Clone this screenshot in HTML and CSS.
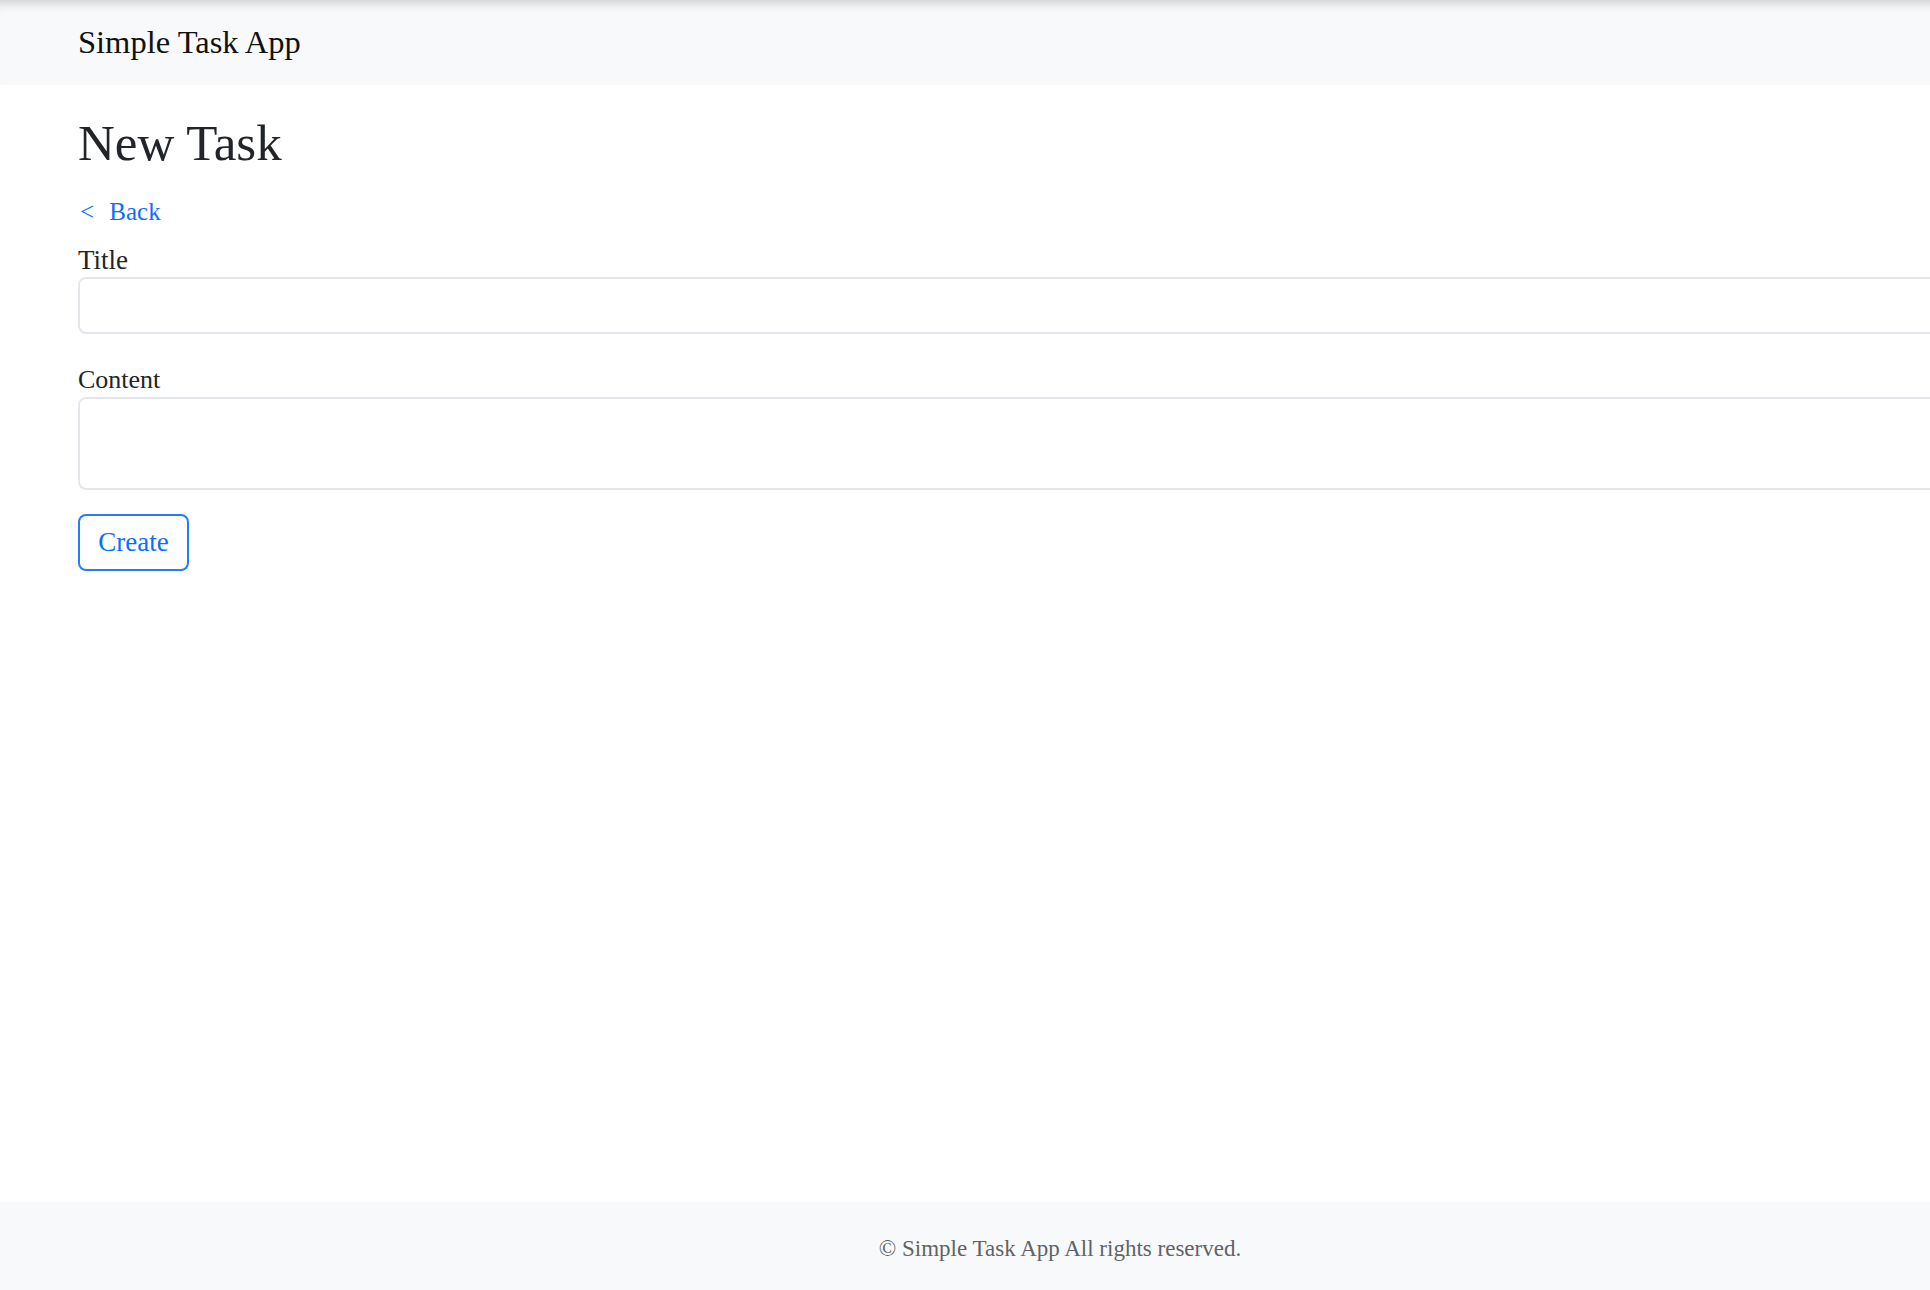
FILE: index.html
```html
<!DOCTYPE html>
<html lang="en">
<head>
  <meta charset="UTF-8" />
  <meta name="viewport" content="width=device-width, initial-scale=1.0"/>
  <title>New Task</title>
  <link rel="stylesheet" href="styles.css">
</head>
<body>

  <div class="page">
    <header class="navbar">
      <a class="brand" href="#">Simple Task App</a>
    </header>

    <main class="container">
      <h1>New Task</h1>

      <a class="back" href="#">&lt; Back</a>

      <form class="task-form">
        <label for="title">Title</label>
        <input type="text" id="title" name="title">

        <label for="content" class="content-label">Content</label>
        <textarea id="content" name="content"></textarea>

        <button type="submit" class="btn">Create</button>
      </form>
    </main>

    <footer class="footer">
      <p>&copy; Simple Task App All rights reserved.</p>
    </footer>
  </div>

</body>
</html>
```

FILE: styles.css
```css
html, body {
  margin: 0;
  overflow: hidden;
}

body {
  font-family: "Liberation Serif", "Times New Roman", serif;
  color: #212529;
  background: #fff;
}

.page {
  width: 2120px;
  min-height: 100vh;
  display: flex;
  flex-direction: column;
}

.navbar {
  background: #f8f9fa;
  padding: 18px 78px 19px;
  box-shadow: inset 0 12px 10px -8px rgba(0, 0, 0, 0.16);
}

.brand {
  display: block;
  font-size: 32.5px;
  line-height: 48px;
  color: #111;
  text-decoration: none;
}

.container {
  flex: 1;
  padding: 0 78px;
}

h1 {
  margin: 28px 0 0;
  font-size: 51px;
  font-weight: normal;
  line-height: 61px;
}

.back {
  display: inline-block;
  margin-top: 18px;
  margin-left: 2px;
  font-size: 25px;
  line-height: 40px;
  word-spacing: 9px;
  color: #0d6efd;
  text-decoration: none;
}

.task-form {
  display: flex;
  flex-direction: column;
  align-items: flex-start;
}

.task-form label {
  margin-top: 12px;
  font-size: 27px;
  line-height: 32px;
}

.task-form .content-label {
  margin-top: 30px;
  font-size: 26px;
}

.task-form input,
.task-form textarea {
  box-sizing: border-box;
  width: 100%;
  margin-top: 1px;
  border: 2px solid #e3e6ea;
  border-radius: 8px;
  background: #fff;
  font: inherit;
  resize: none;
}

.task-form input {
  height: 57px;
}

.task-form textarea {
  height: 93px;
}

.btn {
  margin-top: 24px;
  width: 111px;
  height: 57px;
  border: 2px solid #2b7bf6;
  border-radius: 8px;
  background: #fff;
  color: #0d6efd;
  font-family: inherit;
  font-size: 27px;
  padding: 0;
}

.footer {
  background: #f8f9fa;
  padding: 30px 0 24px;
  text-align: center;
}

.footer p {
  margin: 0;
  font-size: 23px;
  line-height: 34px;
  color: #5f6368;
}
```
